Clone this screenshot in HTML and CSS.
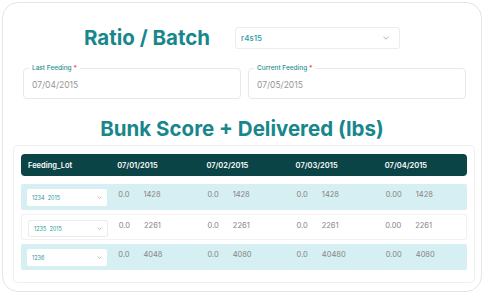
FILE: index.html
```html
<!DOCTYPE html>
<html>
<head>
<meta charset="utf-8">
<link rel="stylesheet" href="styles.css">
</head>
<body>
<div class="card">
  <div class="top-row">
    <h1 class="title">Ratio / Batch</h1>
    <div class="select">
      <span class="select-text">r4s15</span>
      <svg class="chev" width="6" height="4" viewBox="0 0 6 4"><path d="M0.5 0.8 L3 3.2 L5.5 0.8" fill="none" stroke="#9a9a9a" stroke-width="0.8"/></svg>
    </div>
  </div>
  <div class="fields">
    <div class="field">
      <span class="legend">Last Feeding <span class="req">*</span></span>
      <span class="value">07/04/2015</span>
    </div>
    <div class="field">
      <span class="legend">Current Feeding <span class="req">*</span></span>
      <span class="value">07/05/2015</span>
    </div>
  </div>
  <h2 class="title title2">Bunk Score + Delivered (lbs)</h2>
  <div class="table-card">
    <div class="trow head">
      <div class="hcell">Feeding_Lot</div>
      <div class="hcell">07/01/2015</div>
      <div class="hcell">07/02/2015</div>
      <div class="hcell">07/03/2015</div>
      <div class="hcell">07/04/2015</div>
    </div>
    <div class="trow tinted">
      <div class="cell"><div class="mini-select"><span>1234&nbsp;&nbsp;2015</span><svg width="5" height="3" viewBox="0 0 6 4"><path d="M0.5 0.8 L3 3.2 L5.5 0.8" fill="none" stroke="#a0a0a0" stroke-width="0.9"/></svg></div></div>
      <div class="cell"><span class="a">0.0</span><span>1428</span></div>
      <div class="cell"><span class="a">0.0</span><span>1428</span></div>
      <div class="cell"><span class="a">0.0</span><span>1428</span></div>
      <div class="cell"><span class="a">0.00</span><span>1428</span></div>
    </div>
    <div class="trow plain">
      <div class="cell"><div class="mini-select bordered"><span>1235&nbsp;&nbsp;2015</span><svg width="5" height="3" viewBox="0 0 6 4"><path d="M0.5 0.8 L3 3.2 L5.5 0.8" fill="none" stroke="#a0a0a0" stroke-width="0.9"/></svg></div></div>
      <div class="cell"><span class="a">0.0</span><span>2261</span></div>
      <div class="cell"><span class="a">0.0</span><span>2261</span></div>
      <div class="cell"><span class="a">0.0</span><span>2261</span></div>
      <div class="cell"><span class="a">0.00</span><span>2261</span></div>
    </div>
    <div class="trow tinted">
      <div class="cell"><div class="mini-select"><span>1236</span><svg width="5" height="3" viewBox="0 0 6 4"><path d="M0.5 0.8 L3 3.2 L5.5 0.8" fill="none" stroke="#a0a0a0" stroke-width="0.9"/></svg></div></div>
      <div class="cell"><span class="a">0.0</span><span>4048</span></div>
      <div class="cell"><span class="a">0.0</span><span>4080</span></div>
      <div class="cell"><span class="a">0.0</span><span>40480</span></div>
      <div class="cell"><span class="a">0.00</span><span>4080</span></div>
    </div>
  </div>
</div>
</body>
</html>
```
FILE: styles.css
```css
* { box-sizing: border-box; }
html, body { margin: 0; padding: 0; background: #ffffff; }
body { font-family: "Inter", "Open Sans", sans-serif; }

.card {
  margin: 2px 0 0 2px;
  width: 480px;
  height: 290px;
  border: 1.5px solid #e4e4e4;
  border-radius: 16px;
  display: flex;
  flex-direction: column;
  overflow: hidden;
}

.top-row {
  display: flex;
  justify-content: center;
  align-items: center;
  gap: 25px;
  margin-top: 24px;
  height: 22px;
}

.title {
  margin: 0;
  font-size: 20.5px;
  font-weight: 650;
  color: #17878c;
  line-height: 22px;
}

.select {
  width: 165px;
  height: 22px;
  border: 1px solid #ececec;
  border-radius: 3px;
  display: flex;
  align-items: center;
  justify-content: space-between;
  padding: 0 10px 0 5px;
}
.select-text { font-size: 8px; color: #2a9aa0; font-weight: 500; }

.fields {
  display: flex;
  gap: 7px;
  padding: 0 15px 0 20px;
  margin-top: 19px;
}
.field {
  position: relative;
  flex: 1;
  height: 31px;
  border: 1px solid #e8e8e8;
  border-radius: 4px;
  display: flex;
  align-items: center;
  padding: 3px 0 0 8px;
}
.legend {
  position: absolute;
  top: -5px;
  left: 5px;
  padding: 0 3px;
  background: #fff;
  font-size: 6.5px;
  line-height: 9px;
  color: #2a8f94;
  font-weight: 500;
}
.req { color: #e0413a; }
.value { font-size: 8.5px; color: #979797; }

.title2 { text-align: center; margin-top: 19px; }

.table-card {
  margin: 5px 6px 0 10px;
  border: 1px solid #f0f0f0;
  border-radius: 4px;
  padding: 8px 7px 12px 7px;
  display: flex;
  flex-direction: column;
  gap: 4px;
}

.trow {
  display: grid;
  grid-template-columns: repeat(5, 1fr);
  border-radius: 2px;
}
.head {
  background: #0b4446;
  height: 22px;
  border-radius: 4px;
  align-items: center;
  margin-bottom: 4px;
}
.hcell {
  color: #ffffff;
  font-size: 7.5px;
  font-weight: 600;
  padding-left: 7px;
}

.tinted { background: #d6eff2; height: 26px; }
.plain { background: #fff; height: 26px; border: 1px solid #f1f1f1; }

.cell {
  display: flex;
  align-items: flex-start;
  padding: 6px 0 0 8px;
  font-size: 7.5px;
  color: #858585;
}
.cell .a { margin-right: 14px; }

.mini-select {
  width: 80px;
  height: 17px;
  margin-top: -1px;
  margin-left: -2px;
  background: #fff;
  border-radius: 2px;
  display: flex;
  align-items: center;
  justify-content: space-between;
  padding: 0 5px 0 5px;
  font-size: 5.5px;
  color: #2a9aa0;
}
.bordered { border: 1px solid #ededed; }
```
